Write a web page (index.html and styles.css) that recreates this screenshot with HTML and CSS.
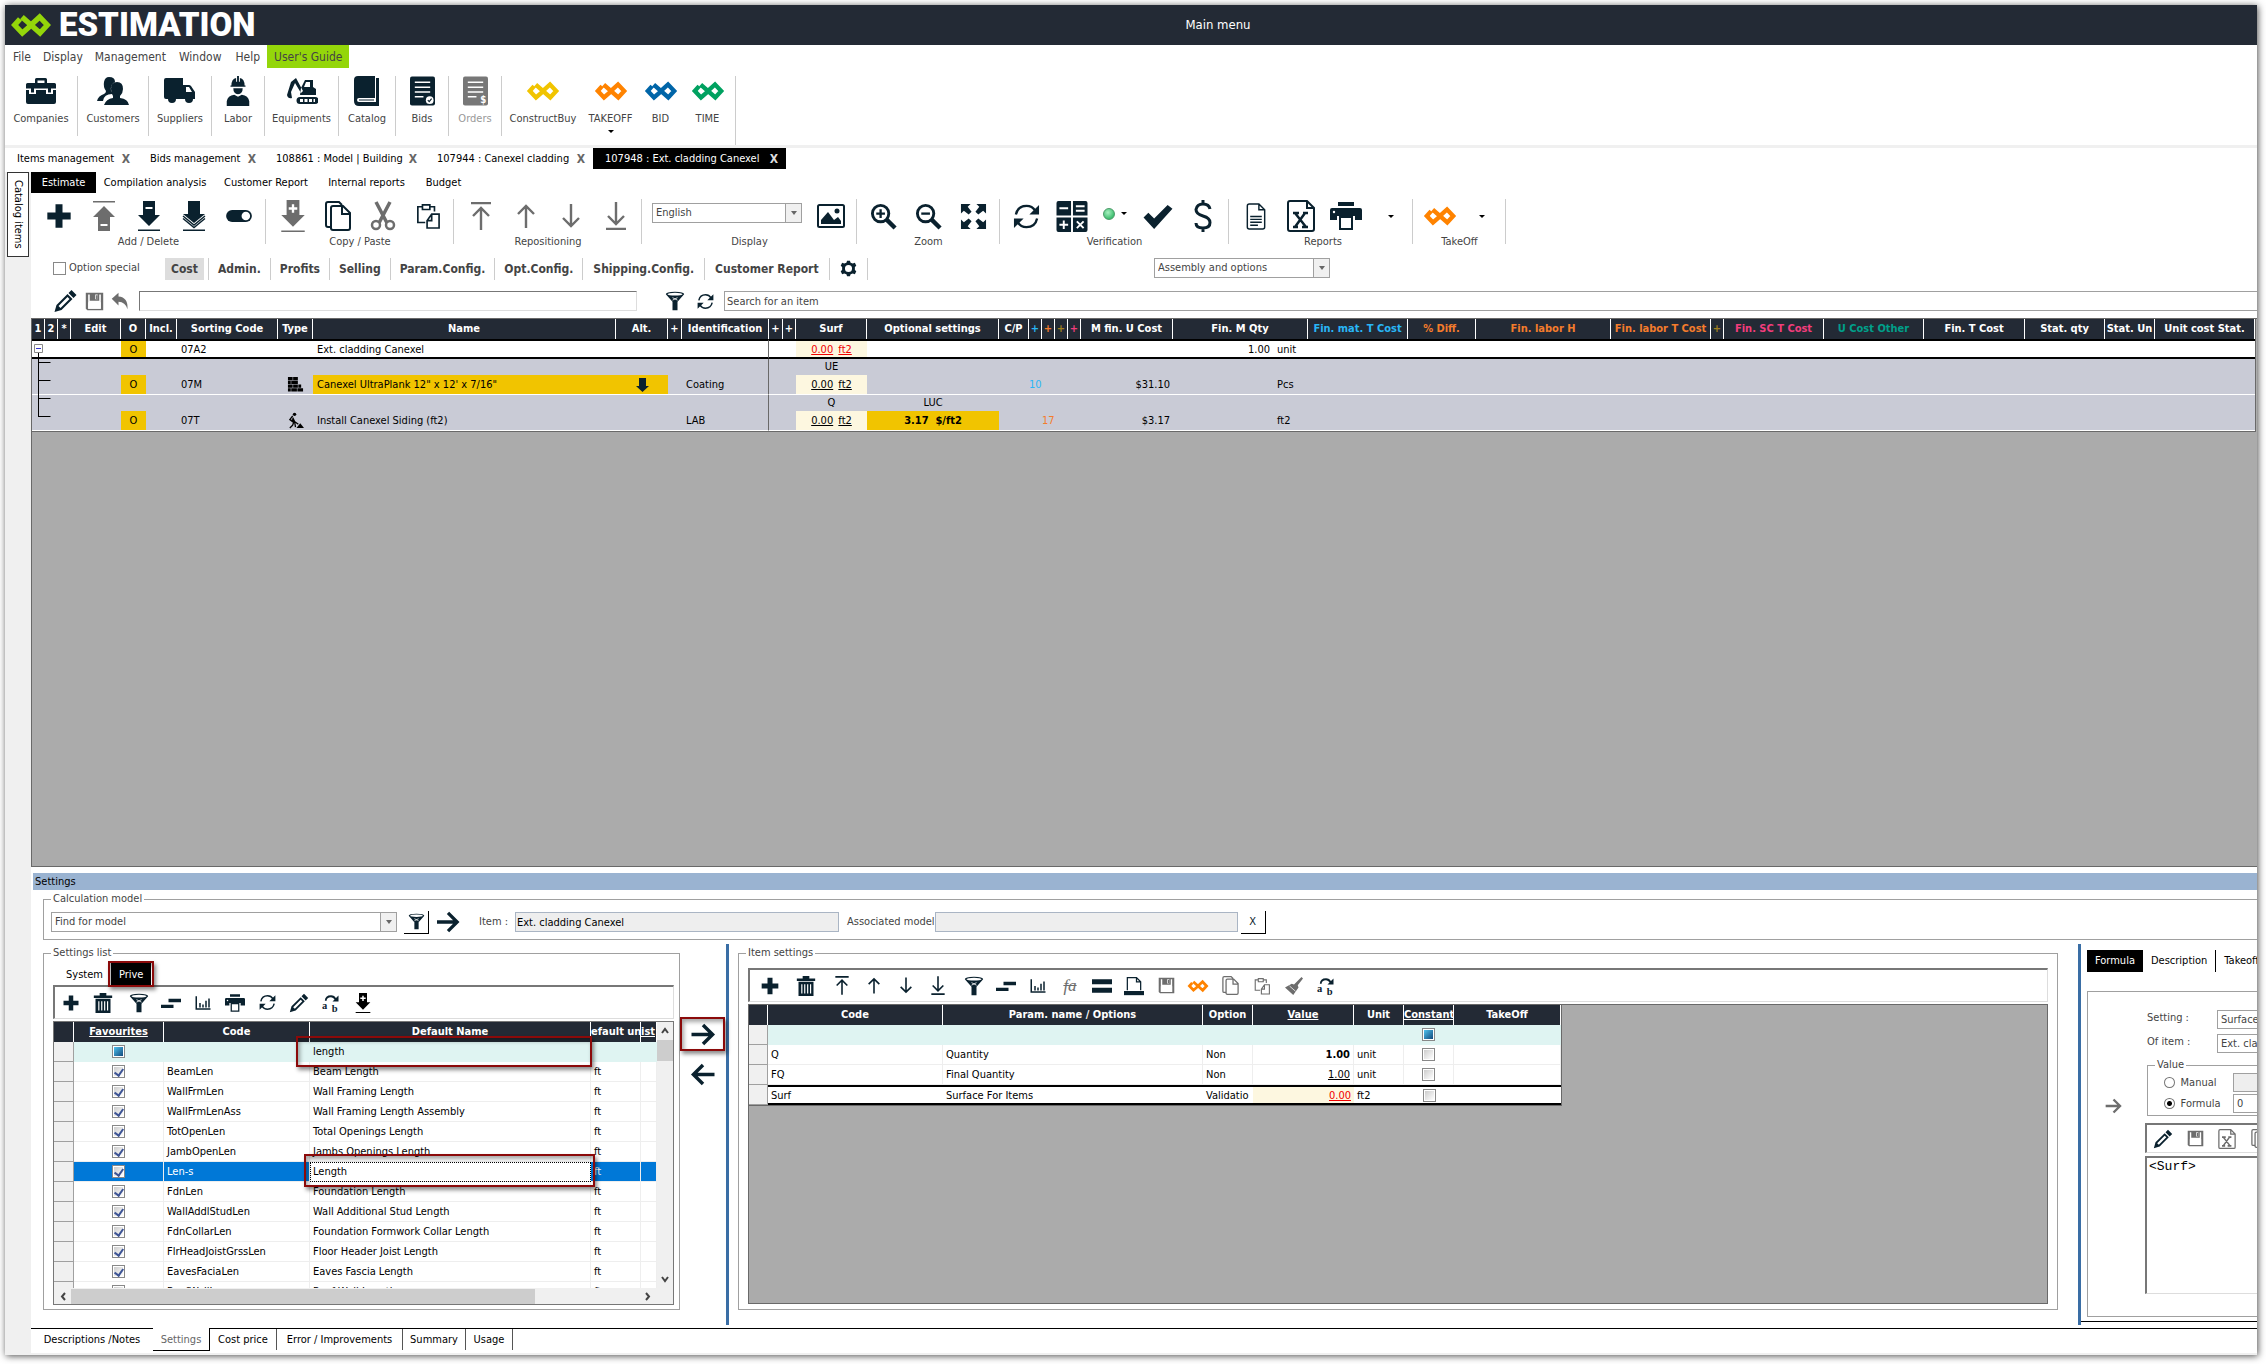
FILE: index.html
```html
<!DOCTYPE html>
<html lang="en">
<head>
  <meta charset="UTF-8">
  <title>Estimation - Main menu</title>
  <meta name="viewport" content="width=device-width, initial-scale=1.0">
  <link rel="stylesheet" href="styles.css">
</head>
<body>

<!-- Icon set -->
<svg class="sprite" aria-hidden="true">
  <symbol id="logo" viewBox="0 0 126 72"><path d="M60 40 37 60 14 36 30 18M36 12 90 60 112 36 89 12 66 33" fill="none" stroke="currentColor" stroke-width="16"/></symbol>
  <symbol id="plus" viewBox="0 0 24 24"><path d="M9 2h6v7h7v6h-7v7H9v-7H2V9h7z"/></symbol>
  <symbol id="case" viewBox="0 0 32 28"><path d="M10 6V2.500q0-1.500 1.500-1.500h9q1.500 0 1.500 1.500V6h7.500Q31 6 31 7.500v4h-5v4h-3v-4H9v4H6v-4H1v-4Q1 6 2.500 6zm2.500-2.500V6h7V3.500zM1 13h3v4h7v-4h10v4h7v-4h3v12q0 2-2 2H3q-2 0-2-2z"/></symbol>
  <symbol id="people" viewBox="0 0 32 28"><path d="M12 0q6 0 6 5-5 2-4 9l1 3Q7 17 6 24H0q1-5 7-7 2-1 2-3Q6 10 7 5t5-5zM20 5q6 0 6 7 0 4-3 7v2q8 1 9 7H7q2-6 9-7v-2q-2-3-2-7 0-7 6-7z"/></symbol>
  <symbol id="truck" viewBox="0 0 32 28"><path d="M0 3q0-2 2-2h17v7h6q1 0 2 1l4 6v7h-2a4 4 0 0 1-8 0H12a4 4 0 0 1-8 0H2q-2 0-2-2zm22 7v5h6l-3-5z" fill-rule="evenodd"/></symbol>
  <symbol id="worker" viewBox="0 0 24 32"><path d="M5 10q0-7 5-8v4h1V0h2v6h1V2q5 1 5 8h1v1.500H4V10zM7 13h10q0 6-5 6.500Q7 19 7 13zM0 32v-5q1-6 8-7l4 2 4-2q7 1 8 7v5z"/></symbol>
  <symbol id="digger" viewBox="0 0 32 28"><path d="M1 18 5 5l5-4 7 13-2 2L9 6l-4 9 1 6q-4 1-5-3zM15 11l4-8h8v7l3 2v6H14zm5-6-2 5h6V5zM14 20h15a3.500 3.500 0 0 1 0 7H14a3.500 3.500 0 0 1 0-7z" fill-rule="evenodd"/><path d="M14 23.500h15" stroke="#fff" stroke-width="3" stroke-dasharray="3 1.500"/></symbol>
  <symbol id="book" viewBox="0 0 26 30"><path d="M4 0h17v22H5q-2 0-2 2t2 2h17V2h3v28H5q-5 0-5-5V4q0-4 4-4z"/><path d="M5 24h15" stroke="currentColor"/></symbol>
  <symbol id="bid" viewBox="0 0 26 30"><rect width="26" height="30" rx="2"/><path d="M5 6h16M5 11h16M5 16h16M5 21h9" stroke="#fff" stroke-width="1.600"/><circle cx="20.500" cy="24.500" r="4" fill="#fff"/><path d="m18.500 24.500 1.500 1.500 2.500-3" fill="none" stroke="currentColor" stroke-width="1.200"/></symbol>
  <symbol id="order" viewBox="0 0 26 30"><rect width="26" height="30" rx="2"/><path d="M5 6h16M5 11h16M5 16h16M5 21h9" stroke="#fff" stroke-width="1.600"/><text x="18" y="28" font-size="10" font-weight="bold" fill="#fff">$</text></symbol>
  <symbol id="up-bar" viewBox="0 0 24 30"><path d="M1 0h22v1.500H1zM12 5l11 11h-5v14H6V16H1z"/><path d="M8.500 24h7" stroke="#fff" stroke-width="2"/></symbol>
  <symbol id="down-bar" viewBox="0 0 24 30"><path d="M1 28.500h22V30H1zM12 25 1 14h5V0h12v14h5z"/><path d="M8.500 7h7" stroke="#fff" stroke-width="2"/></symbol>
  <symbol id="down-plus" viewBox="0 0 24 30"><path d="M1 28.500h22V30H1zM12 25 1 14h5V0h12v14h5z"/><path d="M8 8h8M12 4v8" stroke="#fff" stroke-width="2.200"/></symbol>
  <symbol id="down-all" viewBox="0 0 24 30"><path d="M1 28.500h22V30H1zM12 22 1 13h5V0h12v13h5z"/><path d="m1 15 11 9 11-9M1 17.500l11 9 11-9" fill="none" stroke="currentColor" stroke-width="1.400"/></symbol>
  <symbol id="toggle" viewBox="0 0 30 14"><rect width="30" height="14" rx="7"/><circle cx="23" cy="7" r="5" fill="#fff"/></symbol>
  <symbol id="copy" viewBox="0 0 26 30"><path d="M5 26H3q-2 0-2-2V3q0-2 2-2h11l3 3M6 28V7q0-2 2-2h10l7 7v15q0 2-2 2H8q-2 0-2-2zM17 5v8h8" fill="none" stroke="currentColor" stroke-width="2"/></symbol>
  <symbol id="paste" viewBox="0 0 26 28"><path d="M10 21H2V4h5M15 4h5v5M7 2h8v5H7zM12 19l5-7h8v15H12zh5v-7" fill="none" stroke="currentColor" stroke-width="1.800"/></symbol>
  <symbol id="cut" viewBox="0 0 26 30"><path d="M6 1 17 22M20 1 9 22" stroke="currentColor" stroke-width="3.500"/><circle cx="6" cy="24" r="4" fill="none" stroke="currentColor" stroke-width="2.500"/><circle cx="20" cy="24" r="4" fill="none" stroke="currentColor" stroke-width="2.500"/></symbol>
  <symbol id="arrow-top" viewBox="0 0 24 28"><path d="M2 1h20M12 28V6M4 14l8-8 8 8" fill="none" stroke="currentColor" stroke-width="2.400"/></symbol>
  <symbol id="arrow-up" viewBox="0 0 24 28"><path d="M12 26V4M4 12l8-8 8 8" fill="none" stroke="currentColor" stroke-width="2.400"/></symbol>
  <symbol id="arrow-down" viewBox="0 0 24 28"><path d="M12 2v22M4 16l8 8 8-8" fill="none" stroke="currentColor" stroke-width="2.400"/></symbol>
  <symbol id="arrow-bottom" viewBox="0 0 24 28"><path d="M2 27h20M12 0v22M4 14l8 8 8-8" fill="none" stroke="currentColor" stroke-width="2.400"/></symbol>
  <symbol id="picture" viewBox="0 0 28 24"><rect x="1" y="1" width="26" height="22" rx="1.500" fill="none" stroke="currentColor" stroke-width="2"/><path d="m4 20v-4l7-8 6 8 4-3 3 4v3z"/><circle cx="20" cy="7" r="2.500"/></symbol>
  <symbol id="zoom-in" viewBox="0 0 28 28"><circle cx="11" cy="11" r="8.500" fill="none" stroke="currentColor" stroke-width="3"/><path d="m17 17 9 9" stroke="currentColor" stroke-width="4.500"/><path d="M6.500 11h9M11 6.500v9" stroke="currentColor" stroke-width="2.400"/></symbol>
  <symbol id="zoom-out" viewBox="0 0 28 28"><circle cx="11" cy="11" r="8.500" fill="none" stroke="currentColor" stroke-width="3"/><path d="m17 17 9 9" stroke="currentColor" stroke-width="4.500"/><path d="M6.500 11h9" stroke="currentColor" stroke-width="2.400"/></symbol>
  <symbol id="expand" viewBox="0 0 28 28"><path d="M1 1h10L8 4l4 5-3 3-5-4-3 3zM27 1v10l-3-3-5 4-3-3 4-5-3-3zM1 27V17l3 3 5-4 3 3-4 5 3 3zM27 27H17l3-3-4-5 3-3 5 4 3-3z"/></symbol>
  <symbol id="refresh" viewBox="0 0 28 28"><path d="M3 12Q5 3 14 3q6 0 9 5M25 16q-2 9-11 9-6 0-9-5" fill="none" stroke="currentColor" stroke-width="2.400"/><path d="M27 2v10H17zM1 26V16h10z"/></symbol>
  <symbol id="calc" viewBox="0 0 32 32"><path d="M2 0h13v15H0V2q0-2 2-2zM17 0h13q2 0 2 2v13H17zM0 17h15v15H2q-2 0-2-2zM17 17h15v13q0 2-2 2H17z"/><path d="M3 7.500h9M20 5.500h9M20 10h9M3 24.500h9M7.500 20v9M21 21l7 7M28 21l-7 7" stroke="#fff" stroke-width="2"/></symbol>
  <symbol id="check" viewBox="0 0 32 28"><path d="m1 15 5-5 6 6L26 2l5 4-19 21z"/></symbol>
  <symbol id="dollar" viewBox="0 0 18 32"><path d="M16 9Q15 4 9 4T2 9.500Q2 14 9 16t7 6.500Q16 28 9 28t-7-5M9 0v4M9 28v4" fill="none" stroke="currentColor" stroke-width="3"/></symbol>
  <symbol id="doc" viewBox="0 0 20 28"><path d="M1 3q0-2 2-2h10l6 6v18q0 2-2 2H3q-2 0-2-2zM13 1v6h6M4 14h12M4 17h12M4 20h12M4 23h8" fill="none" stroke="currentColor" stroke-width="1.500"/></symbol>
  <symbol id="excel" viewBox="0 0 28 32"><path d="M1 3q0-2 2-2h17l7 7v21q0 2-2 2H3q-2 0-2-2zM20 1v7h7" fill="none" stroke="currentColor" stroke-width="2"/><path d="M8 13l11 14M18 13 8 27M6 13h6M16 13h5M6 27h5M15 27h6" stroke="currentColor" stroke-width="2.500"/></symbol>
  <symbol id="printer" viewBox="0 0 32 28"><path d="M8 0h16v4H8zM2 6h28q2 0 2 2v10h-7v-4H7v4H0V8q0-2 2-2z"/><path d="M10 15h12v12H10z" fill="none" stroke="currentColor" stroke-width="2"/><circle cx="4" cy="10" r="1.200" fill="#fff"/></symbol>
  <symbol id="pencil" viewBox="0 0 24 24"><path d="m18 1 5 5-3 3-5-5zM14 5l5 5L8 21l-7 2 2-7zM5 17l2 2L16 10l-2-2z" fill-rule="evenodd"/></symbol>
  <symbol id="save" viewBox="0 0 24 24"><path d="M1 1h22v22H3l-2-2zm3 2v18h16V3h-2v8H6V3z" fill-rule="evenodd"/><path d="M13 3h3v6h-3zM4 13h16v8H4z" fill="#fff"/><path d="M14 4h2v5h-2z"/></symbol>
  <symbol id="undo" viewBox="0 0 24 24"><path d="M1 9 10 1v5q13 1 12 17Q19 13 10 13v5z"/></symbol>
  <symbol id="funnel" viewBox="0 0 24 24"><path d="M1 4Q1 1 12 1t11 3L15 13v10H9V13z"/><ellipse cx="12" cy="3.800" rx="9" ry="1.700" fill="#fff"/><path d="m9 8 6 3M15 8l-6 3" stroke="#fff"/></symbol>
  <symbol id="gear" viewBox="0 0 24 24"><path d="M10 1h4l1 3 3 1 3-1 2 4-2 2v4l2 2-2 4-3-1-3 1-1 3h-4l-1-3-3-1-3 1-2-4 2-2v-4L1 8l2-4 3 1 3-1zm2 6a5 5 0 1 0 0 10 5 5 0 0 0 0-10z" fill-rule="evenodd"/></symbol>
  <symbol id="trash" viewBox="0 0 24 24"><path d="M1 3h7V0h8v3h7v3H1zM3 7h18v17H3z"/><path d="M7 10v11M10.500 10v11M14 10v11M17.500 10v11" stroke="#fff" stroke-width="1.400"/></symbol>
  <symbol id="lines" viewBox="0 0 24 24"><path d="M9 7h15v4H9zM0 14h15v4H0z"/></symbol>
  <symbol id="chart" viewBox="0 0 24 24"><path d="M3 3v17h19M8 18v-6M12 18v-4M16 18V9M20 18V6" fill="none" stroke="currentColor" stroke-width="2"/></symbol>
  <symbol id="rename" viewBox="0 0 24 24"><path d="M5 9q0-6 7-6 4 0 6 4" fill="none" stroke="currentColor" stroke-width="2.400"/><path d="M22 2v8h-8z"/><text x="0" y="20" font-size="14" font-weight="bold" font-family="Liberation Serif, serif">a</text><text x="13" y="24" font-size="14" font-weight="bold" font-family="Liberation Serif, serif">b</text></symbol>
  <symbol id="equals" viewBox="0 0 24 24"><path d="M0 4h24v6H0zM0 14h24v6H0z"/></symbol>
  <symbol id="stamp" viewBox="0 0 24 24"><path d="M4 17V2h11l5 5v10M15 2v5h5" fill="none" stroke="currentColor" stroke-width="1.500"/><path d="M0 18h24v5H0z"/></symbol>
  <symbol id="brush" viewBox="0 0 24 24"><path d="m22 0 2 2-7 9 1 3-7 10L0 14l9-5 3 1z"/><path d="m6 12 8 7" stroke="#fff"/></symbol>
  <symbol id="arrow-right" viewBox="0 0 26 24"><path d="M1 12h22M13 2l10 10-10 10" fill="none" stroke="currentColor" stroke-width="3.600"/></symbol>
  <symbol id="arrow-left" viewBox="0 0 26 24"><path d="M25 12H3M13 2 3 12l10 10" fill="none" stroke="currentColor" stroke-width="3.600"/></symbol>
  <symbol id="wall" viewBox="0 0 18 18"><path d="M1 1h5v3.400H1zM6.500 1h5v3.400h-5zM1 5h3v3.400H1zM4.500 5h7v3.400h-7zM1 9h5v3.400H1zM6.500 9h5v3.400h-5zM12 9h3v3.400h-3zM1 13h3v3.400H1zM4.500 13h6v3.400h-6zM11 13h6v3.400h-6z"/></symbol>
  <symbol id="digging" viewBox="0 0 18 18"><circle cx="8" cy="2.500" r="1.800"/><path d="M6 4 3 8l4 3-1 3-3 3M6 6l2 4 1 6M5 8l7 5" fill="none" stroke="currentColor" stroke-width="1.400"/><path d="m10 17 4-5 4 5z"/></symbol>
</svg>

<div class="window">
  <header class="titlebar">
    <div class="brand"><svg width="42" height="24"><use href="#logo"/></svg>ESTIMATION</div>
    <h1>Main menu</h1>
  </header>

  <nav class="menu">
    <a href="#">File</a>
    <a href="#">Display</a>
    <a href="#">Management</a>
    <a href="#">Window</a>
    <a href="#">Help</a>
    <a href="#" class="guide">User's Guide</a>
  </nav>

  <div class="launcher">
    <button class="w73"><svg width="32" height="28"><use href="#case"/></svg>Companies</button>
    <button class="w72"><svg width="32" height="28"><use href="#people"/></svg>Customers</button>
    <button class="w64"><svg width="32" height="28"><use href="#truck"/></svg>Suppliers</button>
    <button class="w52"><svg width="24" height="30"><use href="#worker"/></svg>Labor</button>
    <button class="w74"><svg width="32" height="28"><use href="#digger"/></svg>Equipments</button>
    <button class="w57"><svg width="26" height="28"><use href="#book"/></svg>Catalog</button>
    <button class="w52"><svg width="25" height="29"><use href="#bid"/></svg>Bids</button>
    <button class="w52 off"><svg width="25" height="29"><use href="#order"/></svg>Orders</button>
    <div class="apps">
      <button class="w82 yellow"><svg width="34" height="20"><use href="#logo"/></svg>ConstructBuy</button>
      <button class="w52 orange"><svg width="34" height="20"><use href="#logo"/></svg>TAKEOFF<i class="caret"></i></button>
      <button class="w47 blue"><svg width="34" height="20"><use href="#logo"/></svg>BID</button>
      <button class="w47 green"><svg width="34" height="20"><use href="#logo"/></svg>TIME</button>
    </div>
  </div>

  <nav class="doc-tabs">
    <a href="#" class="w133">Items management <b>X</b></a>
    <a href="#" class="w126">Bids management <b>X</b></a>
    <a href="#" class="w161">108861 : Model | Building <b>X</b></a>
    <a href="#" class="w168">107944 : Canexel cladding <b>X</b></a>
    <a href="#" class="w193 active">107948 : Ext. cladding Canexel <b>X</b></a>
  </nav>

  <div class="workspace">
    <aside class="gutter"><button>Catalog items</button></aside>

    <main>
      <nav class="sub-tabs">
        <a href="#" class="active w65">Estimate</a>
        <a href="#" class="w118">Compilation analysis</a>
        <a href="#" class="w104">Customer Report</a>
        <a href="#" class="w97">Internal reports</a>
        <a href="#" class="w57">Budget</a>
      </nav>

      <div class="ribbon">
        <div class="group">
          <div class="tools">
            <button aria-label="Add"><svg width="28" height="28"><use href="#plus"/></svg></button>
            <button aria-label="Delete above" class="dim"><svg width="24" height="32"><use href="#up-bar"/></svg></button>
            <button aria-label="Delete below"><svg width="24" height="32"><use href="#down-bar"/></svg></button>
            <button aria-label="Delete all"><svg width="24" height="32"><use href="#down-all"/></svg></button>
            <button aria-label="Toggle"><svg width="30" height="12"><use href="#toggle"/></svg></button>
          </div>
          <span>Add / Delete</span>
        </div>
        <div class="group">
          <div class="tools">
            <button aria-label="Insert" class="dim"><svg width="26" height="32"><use href="#down-plus"/></svg></button>
            <button aria-label="Copy"><svg width="26" height="30"><use href="#copy"/></svg></button>
            <button aria-label="Cut" class="dim"><svg width="26" height="30"><use href="#cut"/></svg></button>
            <button aria-label="Paste"><svg width="24" height="28"><use href="#paste"/></svg></button>
          </div>
          <span>Copy / Paste</span>
        </div>
        <div class="group dim">
          <div class="tools">
            <button aria-label="Move to top"><svg width="24" height="28"><use href="#arrow-top"/></svg></button>
            <button aria-label="Move up"><svg width="24" height="28"><use href="#arrow-up"/></svg></button>
            <button aria-label="Move down"><svg width="24" height="28"><use href="#arrow-down"/></svg></button>
            <button aria-label="Move to bottom"><svg width="24" height="28"><use href="#arrow-bottom"/></svg></button>
          </div>
          <span>Repositioning</span>
        </div>
        <div class="group">
          <div class="tools language">
            <div class="combo w150"><select aria-label="Language"><option>English</option></select></div>
            <button aria-label="Picture"><svg width="28" height="24"><use href="#picture"/></svg></button>
          </div>
          <span>Display</span>
        </div>
        <div class="group">
          <div class="tools">
            <button aria-label="Zoom in"><svg width="27" height="27"><use href="#zoom-in"/></svg></button>
            <button aria-label="Zoom out"><svg width="27" height="27"><use href="#zoom-out"/></svg></button>
            <button aria-label="Fit"><svg width="27" height="27"><use href="#expand"/></svg></button>
          </div>
          <span>Zoom</span>
        </div>
        <div class="group">
          <div class="tools">
            <button aria-label="Refresh"><svg width="27" height="27"><use href="#refresh"/></svg></button>
            <button aria-label="Calculate"><svg width="32" height="31"><use href="#calc"/></svg></button>
            <button aria-label="Status" class="status"><i class="led"></i><i class="caret"></i></button>
            <button aria-label="Validate"><svg width="32" height="27"><use href="#check"/></svg></button>
            <button aria-label="Prices"><svg width="18" height="32"><use href="#dollar"/></svg></button>
          </div>
          <span>Verification</span>
        </div>
        <div class="group tight">
          <div class="tools">
            <button aria-label="Report"><svg width="20" height="27"><use href="#doc"/></svg></button>
            <button aria-label="Excel"><svg width="28" height="32"><use href="#excel"/></svg></button>
            <button aria-label="Print"><svg width="32" height="28"><use href="#printer"/></svg></button>
            <button aria-label="Print options"><i class="caret"></i></button>
          </div>
          <span>Reports</span>
        </div>
        <div class="group">
          <div class="tools">
            <button aria-label="TakeOff" class="orange"><svg width="34" height="20"><use href="#logo"/></svg></button>
            <button aria-label="TakeOff options" class="narrow"><i class="caret"></i></button>
          </div>
          <span>TakeOff</span>
        </div>
      </div>

      <div class="config">
        <label class="special"><input type="checkbox"> Option special</label>
        <nav>
          <a href="#" class="active">Cost</a>
          <a href="#">Admin.</a>
          <a href="#">Profits</a>
          <a href="#">Selling</a>
          <a href="#">Param.Config.</a>
          <a href="#">Opt.Config.</a>
          <a href="#">Shipping.Config.</a>
          <a href="#">Customer Report</a>
          <a href="#" aria-label="Configuration"><svg width="17" height="17"><use href="#gear"/></svg></a>
        </nav>
        <div class="combo w176"><select aria-label="View"><option>Assembly and options</option></select></div>
      </div>

      <div class="edit-row">
        <button aria-label="Edit"><svg width="25" height="24"><use href="#pencil"/></svg></button>
        <button aria-label="Save" class="dim"><svg width="19" height="19"><use href="#save"/></svg></button>
        <button aria-label="Undo" class="dim"><svg width="18" height="18"><use href="#undo"/></svg></button>
        <input type="text" class="formula-box" aria-label="Formula">
        <button aria-label="Filter" class="filter"><svg width="20" height="20"><use href="#funnel"/></svg></button>
        <button aria-label="Reload"><svg width="17" height="17"><use href="#refresh"/></svg></button>
        <input type="text" class="search" aria-label="Search" value="Search for an item">
      </div>

      <div class="grid-area">
        <table class="estimate">
          <colgroup>
            <col style="width:13px"><col style="width:13px"><col style="width:13px"><col style="width:50px"><col style="width:25px"><col style="width:31px"><col style="width:101px"><col style="width:35px"><col style="width:303px"><col style="width:52px"><col style="width:14px"><col style="width:87px"><col style="width:14px"><col style="width:13px"><col style="width:71px"><col style="width:132px"><col style="width:30px"><col style="width:13px"><col style="width:13px"><col style="width:13px"><col style="width:13px"><col style="width:92px"><col style="width:100px"><col style="width:35px"><col style="width:100px"><col style="width:68px"><col style="width:135px"><col style="width:100px"><col style="width:13px"><col style="width:100px"><col style="width:100px"><col style="width:101px"><col style="width:80px"><col style="width:50px"><col style="width:100px">
          </colgroup>
          <thead>
            <tr>
              <th>1</th><th>2</th><th>*</th><th>Edit</th><th>O</th><th>Incl.</th><th>Sorting Code</th><th>Type</th><th>Name</th><th>Alt.</th><th>+</th><th>Identification</th><th>+</th><th>+</th><th>Surf</th><th>Optional settings</th><th>C/P</th><th class="c-mat">+</th><th class="c-lab">+</th><th class="c-eq">+</th><th class="c-sub">+</th><th>M fin. U Cost</th><th colspan="2">Fin. M Qty</th><th class="c-mat">Fin. mat. T Cost</th><th class="c-lab">% Diff.</th><th class="c-lab">Fin. labor H</th><th class="c-lab">Fin. labor T Cost</th><th class="c-eq">+</th><th class="c-sub">Fin. SC T Cost</th><th class="c-oth">U Cost Other</th><th>Fin. T Cost</th><th>Stat. qty</th><th>Stat. Un</th><th>Unit cost Stat.</th>
            </tr>
          </thead>
          <tbody>
            <tr class="parent">
              <td colspan="4" class="tree"><svg width="24" height="80"><path d="M6.500 10v66M6.500 21.500h12M6.500 39.500h12M6.500 57.500h12M6.500 75.500h12" fill="none" stroke="#000"/><path d="M2.500 3.500h8v8h-8z" fill="#fff" stroke="#888"/><path d="M4 7.500h5" stroke="#33c"/></svg></td>
              <td class="hot">O</td><td></td><td>07A2</td><td></td><td>Ext. cladding Canexel</td><td colspan="2"></td><td class="ident"></td><td></td><td></td>
              <td class="surf red"><u>0.00</u> <u>ft2</u></td><td colspan="7"></td><td class="num">1.00</td><td>unit</td><td colspan="11"></td>
            </tr>
            <tr class="caption"><td colspan="11"></td><td class="ident"></td><td colspan="2"></td><td>UE</td><td colspan="20"></td></tr>
            <tr class="item">
              <td colspan="4"></td><td class="hot">O</td><td></td><td>07M</td><td class="type"><svg width="17" height="17"><use href="#wall"/></svg></td><td class="hot left">Canexel UltraPlank 12" x 12' x 7/16"</td><td class="hot"><svg width="13" height="14" viewBox="0 0 13 14"><path d="M3 0h7v8h3l-6.500 6L0 8h3z"/></svg></td><td></td><td class="ident">Coating</td><td></td><td></td>
              <td class="surf"><u>0.00</u> <u>ft2</u></td><td></td><td></td><td class="cut c-mat">10</td><td colspan="3"></td><td class="num">$31.10</td><td></td><td>Pcs</td><td colspan="11"></td>
            </tr>
            <tr class="caption"><td colspan="11"></td><td class="ident"></td><td colspan="2"></td><td>Q</td><td>LUC</td><td colspan="19"></td></tr>
            <tr class="item">
              <td colspan="4"></td><td class="hot">O</td><td></td><td>07T</td><td class="type"><svg width="17" height="17"><use href="#digging"/></svg></td><td>Install Canexel Siding (ft2)</td><td></td><td></td><td class="ident">LAB</td><td></td><td></td>
              <td class="surf"><u>0.00</u> <u>ft2</u></td><td class="hot strong">3.17&nbsp; $/ft2</td><td></td><td></td><td class="cut c-lab">17</td><td colspan="2"></td><td class="num">$3.17</td><td></td><td>ft2</td><td colspan="11"></td>
            </tr>
          </tbody>
        </table>
      </div>

      <section class="settings">
        <h2>Settings</h2>
        <fieldset class="calc-model">
          <legend>Calculation model</legend>
          <div class="combo w346"><select aria-label="Find for model"><option>Find for model</option></select></div>
          <button class="raised funnel-btn" aria-label="Filter"><svg width="17" height="17"><use href="#funnel"/></svg></button>
          <button class="go" aria-label="Apply"><svg width="26" height="22"><use href="#arrow-right"/></svg></button>
          <label for="item">Item :</label>
          <input type="text" id="item" class="w324" value="Ext. cladding Canexel" readonly>
          <label for="model" class="assoc">Associated model</label>
          <input type="text" id="model" class="w303" readonly>
          <button class="raised">X</button>
        </fieldset>

        <div class="panes">
          <fieldset class="list-pane">
            <legend>Settings list</legend>
            <nav class="pane-tabs">
              <a href="#">System</a>
              <a href="#" class="active">Prive<i class="marker"></i></a>
            </nav>
            <div class="toolbox">
              <button aria-label="Add"><svg width="18" height="18"><use href="#plus"/></svg></button>
              <button aria-label="Delete"><svg width="20" height="20"><use href="#trash"/></svg></button>
              <button aria-label="Filter" class="after"><svg width="20" height="20"><use href="#funnel"/></svg></button>
              <button aria-label="Compare"><svg width="20" height="20"><use href="#lines"/></svg></button>
              <button aria-label="Statistics"><svg width="18" height="18"><use href="#chart"/></svg></button>
              <button aria-label="Print"><svg width="20" height="18"><use href="#printer"/></svg></button>
              <button aria-label="Refresh"><svg width="17" height="17"><use href="#refresh"/></svg></button>
              <button aria-label="Edit"><svg width="20" height="20"><use href="#pencil"/></svg></button>
              <button aria-label="Rename"><svg width="18" height="18"><use href="#rename"/></svg></button>
              <button aria-label="Import" class="black"><svg width="16" height="20"><use href="#down-plus"/></svg></button>
            </div>
            <div class="scroll-box">
              <div class="rows">
                <table class="data">
                  <colgroup><col style="width:20px"><col style="width:90px"><col style="width:146px"><col style="width:281px"><col style="width:50px"><col style="width:16px"></colgroup>
                  <thead><tr><th></th><th><u>Favourites</u></th><th>Code</th><th>Default Name</th><th class="clip">efault un</th><th class="clip"><u>ist</u></th></tr></thead>
                  <tbody>
                    <tr class="filter"><th></th><td class="tick"><input type="checkbox" class="mixed" aria-label="Favourites filter"></td><td></td><td class="marked">length<i class="marker"></i></td><td></td><td></td></tr>
                    <tr><th></th><td class="tick"><input type="checkbox" checked aria-label="BeamLen"></td><td>BeamLen</td><td>Beam Length</td><td>ft</td><td></td></tr>
                    <tr><th></th><td class="tick"><input type="checkbox" checked aria-label="WallFrmLen"></td><td>WallFrmLen</td><td>Wall Framing Length</td><td>ft</td><td></td></tr>
                    <tr><th></th><td class="tick"><input type="checkbox" checked aria-label="WallFrmLenAss"></td><td>WallFrmLenAss</td><td>Wall Framing Length Assembly</td><td>ft</td><td></td></tr>
                    <tr><th></th><td class="tick"><input type="checkbox" checked aria-label="TotOpenLen"></td><td>TotOpenLen</td><td>Total Openings Length</td><td>ft</td><td></td></tr>
                    <tr><th></th><td class="tick"><input type="checkbox" checked aria-label="JambOpenLen"></td><td>JambOpenLen</td><td>Jambs Openings Length</td><td>ft</td><td></td></tr>
                    <tr class="selected"><th></th><td class="tick"><input type="checkbox" checked aria-label="Len-s"></td><td>Len-s</td><td class="marked focus">Length<i class="marker"></i></td><td>ft</td><td></td></tr>
                    <tr><th></th><td class="tick"><input type="checkbox" checked aria-label="FdnLen"></td><td>FdnLen</td><td>Foundation Length</td><td>ft</td><td></td></tr>
                    <tr><th></th><td class="tick"><input type="checkbox" checked aria-label="WallAddlStudLen"></td><td>WallAddlStudLen</td><td>Wall Additional Stud Length</td><td>ft</td><td></td></tr>
                    <tr><th></th><td class="tick"><input type="checkbox" checked aria-label="FdnCollarLen"></td><td>FdnCollarLen</td><td>Foundation Formwork Collar Length</td><td>ft</td><td></td></tr>
                    <tr><th></th><td class="tick"><input type="checkbox" checked aria-label="FlrHeadJoistGrssLen"></td><td>FlrHeadJoistGrssLen</td><td>Floor Header Joist Length</td><td>ft</td><td></td></tr>
                    <tr><th></th><td class="tick"><input type="checkbox" checked aria-label="EavesFaciaLen"></td><td>EavesFaciaLen</td><td>Eaves Fascia Length</td><td>ft</td><td></td></tr>
                    <tr><th></th><td class="tick"><input type="checkbox" checked aria-label="RoofWallLen"></td><td>RoofWallLen</td><td>Roof Wall Length</td><td>ft</td><td></td></tr>
                  </tbody>
                </table>
              </div>
              <div class="vscroll"><svg width="16" height="266" viewBox="0 0 16 266"><path d="m5 11 3-4 3 4M5 255l3 4 3-4" fill="none" stroke="#444" stroke-width="2"/><path d="M0 18h16v21H0z" fill="#cdcdcd"/></svg></div>
              <div class="hscroll">
                <svg width="6" height="9"><path d="M5 1 2 4.500 5 8" fill="none" stroke="#444" stroke-width="2"/></svg>
                <b></b>
                <svg width="6" height="9"><path d="m1 1 3 3.500L1 8" fill="none" stroke="#444" stroke-width="2"/></svg>
              </div>
            </div>
          </fieldset>

          <div class="movers">
            <button aria-label="Add to item" class="marked"><svg width="26" height="23"><use href="#arrow-right"/></svg><i class="marker"></i></button>
            <button aria-label="Remove from item"><svg width="26" height="23"><use href="#arrow-left"/></svg></button>
          </div>

          <div class="splitter"></div>

          <fieldset class="item-pane">
            <legend>Item settings</legend>
            <div class="toolbox">
              <button aria-label="Add"><svg width="20" height="20"><use href="#plus"/></svg></button>
              <button aria-label="Delete" class="after"><svg width="20" height="20"><use href="#trash"/></svg></button>
              <button aria-label="Move to top" class="after"><svg width="16" height="19"><use href="#arrow-top"/></svg></button>
              <button aria-label="Move up"><svg width="16" height="19"><use href="#arrow-up"/></svg></button>
              <button aria-label="Move down"><svg width="16" height="19"><use href="#arrow-down"/></svg></button>
              <button aria-label="Move to bottom"><svg width="16" height="19"><use href="#arrow-bottom"/></svg></button>
              <button aria-label="Filter" class="after"><svg width="20" height="20"><use href="#funnel"/></svg></button>
              <button aria-label="Compare"><svg width="20" height="20"><use href="#lines"/></svg></button>
              <button aria-label="Statistics"><svg width="18" height="18"><use href="#chart"/></svg></button>
              <button aria-label="Function" class="fx"><s>fa</s></button>
              <button aria-label="Equal"><svg width="20" height="20"><use href="#equals"/></svg></button>
              <button aria-label="Scan"><svg width="20" height="20"><use href="#stamp"/></svg></button>
              <button aria-label="Save" class="dim"><svg width="17" height="17"><use href="#save"/></svg></button>
              <button aria-label="TakeOff" class="orange"><svg width="22" height="14"><use href="#logo"/></svg></button>
              <button aria-label="Copy" class="dim"><svg width="17" height="19"><use href="#copy"/></svg></button>
              <button aria-label="Paste" class="dim"><svg width="16" height="18"><use href="#paste"/></svg></button>
              <button aria-label="Format" class="dim"><svg width="18" height="18"><use href="#brush"/></svg></button>
              <button aria-label="Rename"><svg width="18" height="18"><use href="#rename"/></svg></button>
            </div>
            <div class="grid-box">
              <table class="data items">
                <colgroup><col style="width:19px"><col style="width:175px"><col style="width:260px"><col style="width:50px"><col style="width:101px"><col style="width:50px"><col style="width:50px"><col style="width:107px"></colgroup>
                <thead><tr><th></th><th>Code</th><th>Param. name / Options</th><th>Option</th><th><u>Value</u></th><th>Unit</th><th class="clip"><u>Constant</u></th><th>TakeOff</th></tr></thead>
                <tbody>
                  <tr class="filter"><th></th><td></td><td></td><td></td><td></td><td></td><td class="tick"><input type="checkbox" class="mixed" aria-label="Constant filter"></td><td></td></tr>
                  <tr><th></th><td>Q</td><td>Quantity</td><td>Non</td><td class="num strong">1.00</td><td>unit</td><td class="tick"><input type="checkbox" aria-label="Q constant"></td><td></td></tr>
                  <tr><th></th><td>FQ</td><td>Final Quantity</td><td>Non</td><td class="num"><u>1.00</u></td><td>unit</td><td class="tick"><input type="checkbox" aria-label="FQ constant"></td><td></td></tr>
                  <tr class="current"><th></th><td>Surf</td><td>Surface For Items</td><td>Validatio</td><td class="num red surf"><u>0.00</u></td><td>ft2</td><td class="tick"><input type="checkbox" aria-label="Surf constant"></td><td></td></tr>
                </tbody>
              </table>
            </div>
          </fieldset>

          <div class="splitter"></div>

          <div class="formula-pane">
            <nav>
              <a href="#" class="active">Formula</a>
              <a href="#">Description</a>
              <a href="#">Takeoff</a>
            </nav>
            <div class="formula-body">
              <svg class="dim" width="17" height="16"><use href="#arrow-right"/></svg>
              <div class="form">
                <div class="field"><label for="setting">Setting :</label><input type="text" id="setting" value="Surface For Items"></div>
                <div class="field"><label for="of">Of item :</label><input type="text" id="of" value="Ext. cladding Canexel"></div>
                <fieldset>
                  <legend>Value</legend>
                  <div class="pick"><input type="radio" name="v" id="man"><label for="man">Manual</label><input type="text" aria-label="Manual value" disabled></div>
                  <div class="pick"><input type="radio" name="v" id="for" checked><label for="for">Formula</label><input type="text" aria-label="Formula value" value="0"></div>
                </fieldset>
                <div class="toolbox">
                  <button aria-label="Edit"><svg width="20" height="20"><use href="#pencil"/></svg></button>
                  <button aria-label="Save" class="dim"><svg width="17" height="17"><use href="#save"/></svg></button>
                  <button aria-label="Excel" class="dim"><svg width="18" height="20"><use href="#excel"/></svg></button>
                  <button aria-label="Copy" class="dim"><svg width="17" height="19"><use href="#copy"/></svg></button>
                </div>
                <textarea aria-label="Formula text">&lt;Surf&gt;</textarea>
              </div>
            </div>
          </div>
        </div>
      </section>

      <nav class="bottom-tabs">
        <a href="#" class="first">Descriptions /Notes</a>
        <a href="#" class="active">Settings</a>
        <a href="#" class="w67">Cost price</a>
        <a href="#" class="w126">Error / Improvements</a>
        <a href="#" class="w64">Summary</a>
        <a href="#" class="w47">Usage</a>
      </nav>
    </main>
  </div>
</div>

</body>
</html>
```

FILE: styles.css
```css
:root {
  --dark: #232a35;
  --icon: #0a212e;
  --dim: #6d6d6d;
  --text: #444;
  --line: #a0a0a0;
  --hot: #f1c400;
  --fill: #ababab;
  --row: #c9cbd6;
  --soft: #f0f0f0;
  --orange: #ff8300;
}

* {
  box-sizing: border-box;
}

body {
  margin: 0;
  padding: 5px 9px 9px 5px;
  height: 100vh;
  background: #fff;
  color: var(--text);
  font: 11px/14px "DejaVu Sans Condensed", "Noto Sans", sans-serif;
}

.sprite {
  display: none;
}

svg {
  display: block;
  fill: currentColor;
  flex: none;
}

a {
  color: inherit;
  text-decoration: none;
}

i {
  font-style: normal;
}

button, input, select, textarea {
  font: inherit;
  color: inherit;
  margin: 0;
  border-radius: 0;
}

button {
  display: flex;
  align-items: center;
  justify-content: center;
  position: relative;
  padding: 0;
  border: 0;
  background: none;
  color: var(--icon);
}

fieldset {
  min-width: 0;
  margin: 0;
  padding: 0;
  border: 1px solid var(--line);
}

legend {
  padding: 0 2px;
  margin-left: 7px;
}

.w47 { width: 47px; }
.w52 { width: 53px; }
.w57 { width: 57px; }
.w64 { width: 63px; }
.w65 { width: 65px; }
.w67 { width: 67px; }
.w72 { width: 71px; }
.w73 { width: 73px; }
.w74 { width: 74px; }
.w82 { width: 82px; }
.w97 { width: 97px; }
.w104 { width: 104px; }
.w118 { width: 118px; }
.w126 { width: 126px; }
.w133 { width: 133px; }
.w150 { width: 150px; }
.w161 { width: 161px; }
.w168 { width: 168px; }
.w176 { width: 176px; }
.w193 { width: 193px; }
.w303 { width: 303px; }
.w324 { width: 324px; }
.w346 { width: 346px; }

.window {
  display: flex;
  flex-direction: column;
  height: 100%;
  overflow: hidden;
  background: #fff;
  box-shadow: 1px 1px 7px rgba(0,0,0,0.7);
}

.titlebar {
  display: flex;
  align-items: center;
  height: 40px;
  flex: none;
  padding-left: 5px;
  background: var(--dark);
  color: #fff;
}

.brand {
  display: flex;
  align-items: center;
  gap: 7px;
  width: 169px;
  font: 900 33px/40px Roboto, sans-serif;
  white-space: nowrap;
}

.brand svg {
  color: #94d60a;
}

.titlebar h1 {
  flex: 1;
  margin: 0;
  font-size: 13px;
  font-weight: normal;
  text-align: center;
}

.menu {
  display: flex;
  height: 23px;
  flex: none;
  padding-left: 2px;
  font-size: 12px;
}

.menu a {
  padding: 0 6px;
  line-height: 25px;
}

.menu a:nth-child(n+4) {
  padding: 0 7px;
}

.menu .guide {
  background: #94d60a;
}

.launcher {
  display: flex;
  height: 80px;
  flex: none;
  padding-top: 8px;
  border-bottom: 3px solid var(--soft);
}

.launcher button {
  flex-direction: column;
  justify-content: flex-start;
  height: 60px;
  border-right: 1px solid #ccc;
  color: var(--text);
}

.launcher svg {
  color: var(--icon);
  height: 30px;
  margin-bottom: 6px;
}

.launcher .off {
  color: #999;
}

.launcher .off svg {
  color: #777;
}

.apps {
  display: flex;
  padding-right: 4px;
  border-right: 1px solid #ccc;
}

.launcher .apps button {
  border: 0;
}

.apps .yellow svg { color: var(--hot); }
.apps .orange svg { color: var(--orange); }
.apps .blue svg { color: #0065a8; }
.apps .green svg { color: #00a160; }
.orange { color: var(--orange); }

.caret {
  border: 3px solid transparent;
  border-top-color: #000;
  border-bottom: 0;
}

.launcher .caret {
  margin-top: 4px;
}

.doc-tabs {
  display: flex;
  height: 24px;
  flex: none;
  color: #000;
}

.doc-tabs a {
  display: flex;
  justify-content: space-between;
  height: 21px;
  padding: 0 8px 0 12px;
  line-height: 22px;
}

.doc-tabs b {
  color: #666;
  font-size: 12px;
}

.active {
  background: #000;
  color: #fff;
}

.doc-tabs .active b {
  color: #ddd;
}

.workspace {
  display: flex;
  flex: 1;
  min-height: 0;
}

.gutter {
  width: 26px;
  flex: none;
  padding: 0 2px;
  background: var(--soft);
}

.gutter button {
  width: 22px;
  height: 85px;
  border: 1px solid #333;
  background: #fff;
  color: #000;
  writing-mode: vertical-rl;
}

main {
  display: flex;
  flex-direction: column;
  flex: 1;
  min-width: 0;
}

.sub-tabs {
  display: flex;
  height: 21px;
  flex: none;
  line-height: 22px;
  color: #000;
  text-align: center;
}

.ribbon {
  display: flex;
  height: 61px;
  flex: none;
  padding-top: 6px;
}

.group {
  padding: 0 4px;
  background: linear-gradient(#ccc, #ccc) right top / 1px 45px no-repeat;
  text-align: center;
}

.group:first-child {
  padding: 0 5px;
}

.group.tight {
  padding-right: 0;
}

.tools {
  display: flex;
  height: 34px;
}

.tools button {
  width: 45px;
}

.tools .narrow {
  width: 40px;
}

.tools + span {
  display: block;
  line-height: 17px;
}

.dim,
.dim button {
  color: var(--dim);
}

.group.dim span {
  color: var(--text);
}

.language {
  gap: 6px;
  padding-left: 6px;
}

.language .combo {
  margin-top: 4px;
}

.tools .status {
  width: 41px;
  gap: 6px;
  align-items: flex-start;
  padding-top: 9px;
}

.status .caret {
  margin-top: 4px;
}

.led {
  width: 12px;
  height: 12px;
  border-radius: 50%;
  background: radial-gradient(circle at 40% 35%, #a8f0c0, #3fbf70 70%);
  border: 1px solid #4a9a68;
}

.combo {
  position: relative;
  height: 20px;
  flex: none;
}

.combo select {
  width: 100%;
  height: 100%;
  appearance: none;
  border: 1px solid var(--line);
  background: linear-gradient(var(--line), var(--line)) right 15px top / 1px 100% no-repeat, linear-gradient(var(--soft), var(--soft)) right top / 15px 100% no-repeat, #fff;
  padding: 0 3px;
}

.combo::after {
  content: "";
  position: absolute;
  right: 5px;
  top: 8px;
  border: 3px solid transparent;
  border-top: 4px solid #666;
  border-bottom: 0;
}

.config {
  display: flex;
  align-items: flex-start;
  height: 36px;
  flex: none;
  padding-top: 4px;
}

.special {
  display: flex;
  align-items: center;
  gap: 3px;
  width: 134px;
  height: 20px;
  padding-left: 22px;
}

.special input {
  appearance: none;
  width: 13px;
  height: 13px;
  border: 1px solid #888;
}

.config nav {
  display: flex;
  width: 989px;
  font-size: 12px;
  font-weight: bold;
}

.config nav a {
  height: 22px;
  padding: 0 9px;
  border-right: 1px solid #ccc;
  line-height: 22px;
}

.config nav a:nth-last-child(-n+3) {
  padding: 0 10px;
}

.config nav .active {
  margin-right: 4px;
  padding: 0 6px;
  border: 0;
  background: #ddd;
  color: var(--text);
}

.config nav .active + a {
  border-left: 1px solid #ccc;
}

.config nav svg {
  margin-top: 2px;
  color: var(--icon);
}

.edit-row {
  display: flex;
  align-items: center;
  height: 28px;
  flex: none;
  gap: 7px;
  padding: 0 0 6px 22px;
}

.formula-box {
  width: 498px;
  height: 20px;
  margin-left: 3px;
  border: 1px solid #ddd;
  border-top-color: #777;
  border-left-color: #777;
}

.edit-row .filter {
  margin-left: 21px;
  margin-right: 5px;
}

.search {
  flex: 1;
  height: 20px;
  margin-left: 3px;
  border: 1px solid var(--line);
  border-right: 0;
  padding: 0 2px;
}

.grid-area {
  flex: 1;
  min-height: 0;
  overflow: hidden;
  background: var(--fill);
  border: 1px solid #696969;
  border-right: 0;
}

table {
  border-collapse: separate;
  border-spacing: 0;
  table-layout: fixed;
  color: #000;
}

td, th {
  padding: 0;
  overflow: hidden;
  white-space: nowrap;
}

thead th {
  height: 20px;
  background: var(--dark);
  color: #fff;
  border-right: 1px solid #fff;
  text-align: center;
}

.estimate {
  width: 2224px;
  background: var(--row);
  border-right: 1px solid #696969;
  border-bottom: 1px solid #696969;
}

.estimate .c-mat { color: #29b6f6; }
.estimate .c-lab { color: #f47c2c; }
.estimate .c-eq { color: #a08020; }
.estimate .c-sub { color: #f23d7c; }
.estimate .c-oth { color: #00a08a; }

.estimate td {
  padding-left: 4px;
}

.estimate .parent td {
  height: 20px;
  border-top: 2px solid #000;
  border-bottom: 2px solid #000;
  background: #fff;
  line-height: 15px;
}

.estimate td.tree {
  position: relative;
  overflow: visible;
}

.tree svg {
  position: absolute;
  left: 0;
  top: 0;
}

.estimate .caption td {
  height: 16px;
  padding: 0;
  text-align: center;
}

.item td {
  height: 20px;
  border-bottom: 1px solid #fff;
  line-height: 18px;
}

.estimate td.ident {
  border-right: 1px solid #696969;
}

.estimate .hot,
.estimate .parent .hot {
  background: var(--hot);
  padding: 0;
  text-align: center;
}

.estimate .hot.left {
  padding-left: 4px;
  text-align: left;
}

.hot svg {
  margin: auto;
  color: var(--icon);
}

.estimate .type {
  padding: 0;
}

.type svg {
  margin: auto;
}

.estimate .surf,
.estimate .parent .surf {
  background: #fdf7e0;
  padding: 0;
  text-align: center;
}

.surf u + u {
  margin-left: 2px;
}

.strong {
  font-weight: bold;
}

.red {
  color: #f00000;
}

td.num {
  text-align: right;
  padding-right: 3px;
}

.estimate .cut {
  padding: 0;
}

.settings {
  flex: none;
  border-bottom: 1px solid #000;
}

.settings h2 {
  height: 17px;
  margin: 6px 0 2px 2px;
  padding-left: 2px;
  background: #9ab3d1;
  color: #000;
  font-size: 11px;
  font-weight: normal;
  line-height: 17px;
}

.calc-model {
  display: flex;
  align-items: center;
  height: 48px;
  margin-left: 12px;
  padding: 0 0 1px 7px;
  border-right: 0;
}

.calc-model legend {
  margin-left: 0;
}

.calc-model input {
  height: 20px;
  border: 1px solid #aab5c4;
  background: #eee;
  color: #000;
  padding: 0 1px;
}

.calc-model label {
  margin-right: 7px;
}

.calc-model .assoc {
  margin: 0 0 0 8px;
}

.raised {
  width: 25px;
  height: 23px;
  margin-left: 3px;
  border-right: 1px solid #000;
  border-bottom: 1px solid #000;
}

.calc-model .funnel-btn {
  margin-left: 7px;
}

.go {
  margin: 0 18px 0 6px;
}

.panes {
  display: flex;
  height: 381px;
  margin: 4px 0 3px 12px;
}

.list-pane {
  width: 637px;
  flex: none;
  height: 364px;
  margin-top: 2px;
  padding: 0 5px 0 9px;
}

.list-pane legend,
.item-pane legend {
  margin-left: -2px;
}

.pane-tabs {
  display: flex;
  height: 25px;
  padding: 3px 0 0 8px;
  color: #000;
  line-height: 24px;
}

.pane-tabs a {
  position: relative;
  height: 22px;
  padding: 0 5px;
}

.pane-tabs .active {
  margin-left: 3px;
  padding: 0 8px;
}

.pane-tabs .active .marker {
  inset: -2px -3px -2px -3px;
}

/* red highlight frames */
.marker {
  position: absolute;
  z-index: 2;
  border: 2px solid #8b0a0a;
  box-shadow: 2px 3px 4px rgba(0,0,0,0.45), inset 2px 3px 4px rgba(0,0,0,0.35);
  pointer-events: none;
}

.toolbox {
  display: flex;
  align-items: center;
  height: 34px;
  border: 1px solid #ddd;
  border-top: 2px solid #777;
  border-left: 2px solid #777;
}

.toolbox button {
  width: 32px;
  height: 24px;
}

.toolbox .after {
  margin-left: 4px;
}

.toolbox .black {
  color: #000;
}

.toolbox .fx {
  color: var(--dim);
  font: italic 17px/20px "Liberation Serif", serif;
}

.scroll-box {
  display: grid;
  grid-template-columns: 1fr 16px;
  margin-top: 2px;
  border: 1px solid #777;
  background: var(--soft);
}

.rows {
  height: 266px;
  overflow: hidden;
}

.data {
  width: 603px;
  background: #fff;
}

.data tbody td {
  height: 20px;
  padding-left: 3px;
  border-right: 1px solid #eee;
  border-bottom: 1px solid #eee;
  line-height: 18px;
}

.data tbody .tick {
  padding-left: 0;
}

.data tbody th {
  background: var(--soft);
  border-right: 1px solid var(--line);
  border-bottom: 1px solid var(--line);
}

.data .filter td {
  background: #dff4f2;
  border-color: #dff4f2;
}

.data .clip {
  text-align: left;
}

.data input {
  display: block;
  appearance: none;
  width: 13px;
  height: 13px;
  margin: auto;
  border: 1px solid #888;
  background: linear-gradient(135deg, #ccc, #fff) center / 9px 9px no-repeat, #fff;
  position: relative;
}

.data input:checked::after {
  content: "";
  position: absolute;
  left: 3px;
  top: 1px;
  width: 4px;
  height: 7px;
  border: solid #3d5495;
  border-width: 0 2px 2px 0;
  transform: rotate(35deg);
}

.data .mixed {
  background: linear-gradient(135deg, #4fc3ee, #12497c) center / 9px 9px no-repeat, #fff;
}

.data .selected td {
  background: #0078d7;
  color: #fff;
}

.data td.marked {
  position: relative;
  overflow: visible;
}

.data td.marked .marker {
  inset: -6px -2px -6px -14px;
}

.data .selected td.focus {
  background: #fff;
  color: #000;
  outline: 1px dotted #000;
  outline-offset: -1px;
}

.data td.focus .marker {
  inset: -8px -5px -6px -6px;
}

.hscroll {
  display: flex;
  align-items: center;
  height: 16px;
  padding: 0 6px;
  grid-column: 1;
}

.hscroll b {
  width: 464px;
  height: 15px;
  margin: 0 auto 0 5px;
  background: #cdcdcd;
}

.movers {
  display: flex;
  flex-direction: column;
  gap: 6px;
  width: 46px;
  flex: none;
  padding-top: 73px;
}

.movers button {
  height: 34px;
  margin: 0 1px 0 0;
}

.movers .marker {
  inset: 0;
}

.splitter {
  width: 3px;
  flex: none;
  background: #3a6ea5;
}

.item-pane {
  flex: 1;
  height: 364px;
  margin: 2px 20px 0 9px;
  padding: 8px 9px 0;
}

.item-pane .toolbox {
  padding-left: 4px;
}

.grid-box {
  height: 300px;
  margin-top: 2px;
  background: var(--fill);
  border: 1px solid #696969;
}

.items {
  width: 813px;
  border-right: 1px solid #696969;
  border-bottom: 1px solid #696969;
}

.items .current td {
  border-top: 2px solid #000;
  border-bottom: 2px solid #000;
  border-right: 0;
  line-height: 15px;
}

.items td.surf {
  background: #fdf7e0;
}

.formula-pane {
  width: 176px;
  flex: none;
  overflow: hidden;
  border-bottom: 1px solid #000;
  margin-bottom: 3px;
}

.formula-pane nav {
  display: flex;
  padding: 6px 0 0 6px;
  color: #000;
  line-height: 22px;
}

.formula-pane nav a {
  flex: none;
  padding: 0 8px;
}

.formula-pane nav a:nth-child(2) {
  border-right: 1px solid #000;
}

.formula-body {
  display: flex;
  height: 326px;
  margin: 19px 0 0 6px;
  border: 1px solid var(--line);
  border-right: 0;
}

.formula-body > svg {
  margin: 106px 15px 0 17px;
}

.form {
  width: 320px;
  flex: none;
  padding: 18px 0 0 10px;
}

.field {
  display: flex;
  height: 24px;
}

.field label {
  width: 70px;
  line-height: 16px;
}

.form input[type="text"] {
  width: 160px;
  height: 19px;
  border: 1px solid var(--line);
  padding: 0 3px;
}

.form fieldset {
  width: 240px;
  height: 58px;
}

.pick {
  display: flex;
  align-items: center;
  height: 21px;
  padding-left: 16px;
}

.pick input[type="radio"] {
  appearance: none;
  width: 11px;
  height: 11px;
  border: 1px solid #777;
  border-radius: 50%;
}

.pick input:checked {
  background: radial-gradient(circle, #000 0 2px, #fff 3px);
}

.pick label {
  width: 61px;
  padding-left: 6px;
}

.pick input:disabled {
  background: #eee;
}

.form .toolbox {
  height: 30px;
  margin: 7px 0 3px -2px;
}

.form textarea {
  display: block;
  width: 300px;
  height: 138px;
  margin-left: -2px;
  padding: 0 2px;
  border: 1px solid #ddd;
  border-top: 2px solid #777;
  border-left: 2px solid #777;
  color: #000;
  font: 13px/18px "Liberation Mono", monospace;
  resize: none;
}

.bottom-tabs {
  display: flex;
  height: 26px;
  flex: none;
  padding-bottom: 3px;
  border-bottom: 2px solid var(--soft);
  color: #000;
  line-height: 22px;
  text-align: center;
}

.bottom-tabs a {
  border-right: 1px solid #555;
}

.bottom-tabs .first {
  width: 122px;
  border: 0;
}

.bottom-tabs .active {
  position: relative;
  top: -1px;
  width: 57px;
  height: 23px;
  border-right: 1px solid #000;
  border-bottom: 1px solid #000;
  background: #fff;
  color: #666;
  line-height: 24px;
}
```
